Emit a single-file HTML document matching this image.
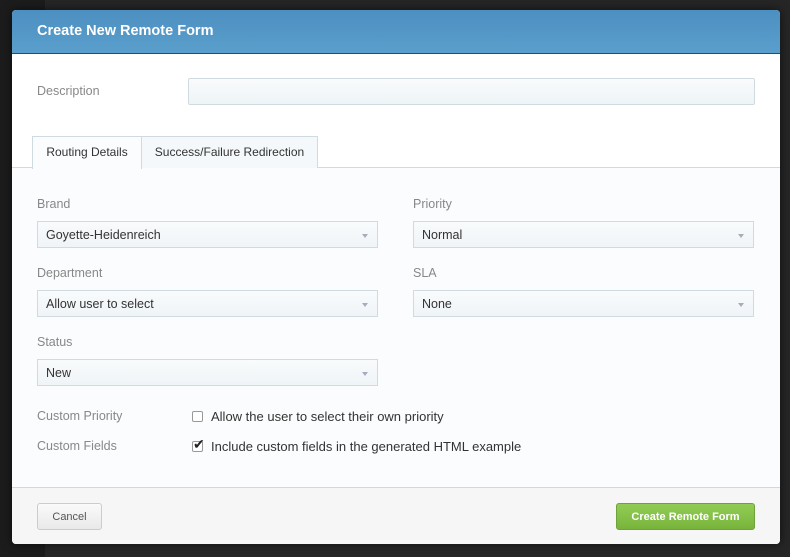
<!DOCTYPE html>
<html><head><style>
*{box-sizing:border-box;margin:0;padding:0}
body{width:790px;height:557px;background:#1c1c1c;font-family:"Liberation Sans",Arial,sans-serif;position:relative;overflow:hidden}
.bgtop{position:absolute;left:45px;top:0;width:745px;height:557px;background:#262626}
.modal{position:absolute;left:12px;top:10px;width:768px;height:534px;background:#fff;border-radius:4px;overflow:hidden;box-shadow:0 0 10px rgba(0,0,0,.6)}
.hd{height:44px;background:linear-gradient(#4c8fc1,#5a9fcc);border-bottom:1px solid #2b4a63;color:#fff;font-weight:bold;font-size:14.5px;padding:13px 0 0 25px}
.lbl{position:absolute;color:#888;font-size:12.5px}
.inp{position:absolute;border:1px solid #cfdbe1;background:linear-gradient(#f9fbfc,#eef4f7);border-radius:2px}
.sel{position:absolute;border:1px solid #cfdbe1;background:linear-gradient(#f9fbfc,#eff4f7);height:27px;width:341px;font-size:12.5px;color:#333;padding:6px 0 0 8px}
.sel:after{content:"";position:absolute;right:9px;top:12px;border:3px solid transparent;border-top:4px solid #aab;}
.tab{position:absolute;top:0;height:32px;border:1px solid #cfdbe1;border-bottom:none;font-size:12px;color:#333;padding:8px 0 0;text-align:center;background:#f4f8fa}
.pane{position:absolute;top:157px;left:0;width:768px;height:320px;background:#fbfcfd;border-top:1px solid #cfdbe1}
.ft{position:absolute;top:477px;left:0;width:768px;height:57px;background:#f6f6f6;border-top:1px solid #d6d6d6}
.btn{position:absolute;font-size:11px;font-weight:bold;border-radius:3px;text-align:center}
.cb{position:absolute;width:11px;height:11px;border:1px solid #999;border-radius:2px;background:#fff}
.ct{position:absolute;font-size:13px;color:#333}
</style></head><body>
<div class="bgtop"></div>
<div class="modal">
<div class="hd">Create New Remote Form</div>
<div class="lbl" style="left:25px;top:74px">Description</div>
<div class="inp" style="left:176px;top:68px;width:567px;height:27px"></div>
<div class="pane">
<div class="lbl" style="left:25px;top:29px">Brand</div>
<div class="sel" style="left:25px;top:53px">Goyette-Heidenreich</div>
<div class="lbl" style="left:25px;top:98px">Department</div>
<div class="sel" style="left:25px;top:122px">Allow user to select</div>
<div class="lbl" style="left:25px;top:167px">Status</div>
<div class="sel" style="left:25px;top:191px">New</div>
<div class="lbl" style="left:401px;top:29px">Priority</div>
<div class="sel" style="left:401px;top:53px">Normal</div>
<div class="lbl" style="left:401px;top:98px">SLA</div>
<div class="sel" style="left:401px;top:122px">None</div>
<div class="lbl" style="left:25px;top:241px">Custom Priority</div>
<div class="cb" style="left:180px;top:243px"></div>
<div class="ct" style="left:199px;top:241px">Allow the user to select their own priority</div>
<div class="lbl" style="left:25px;top:271px">Custom Fields</div>
<div class="cb" style="left:180px;top:273px"></div>
<div style="position:absolute;left:181px;top:268px;font-size:14px;color:#222">✔</div>
<div class="ct" style="left:199px;top:271px">Include custom fields in the generated HTML example</div>
</div>
<div class="tab" style="left:20px;top:126px;width:110px;background:#fbfcfd;height:33px">Routing Details</div>
<div class="tab" style="left:129px;top:126px;width:177px">Success/Failure Redirection</div>
<div class="ft">
<div class="btn" style="left:25px;top:15px;width:65px;height:27px;border:1px solid #ccc;background:linear-gradient(#fafafa,#e9e9e9);color:#555;padding-top:7px;font-weight:normal">Cancel</div>
<div class="btn" style="left:604px;top:15px;width:139px;height:27px;border:1px solid #6ea23a;background:linear-gradient(#92cc54,#78b43c);color:#fff;padding-top:7px">Create Remote Form</div>
</div>
</div>
</body></html>
